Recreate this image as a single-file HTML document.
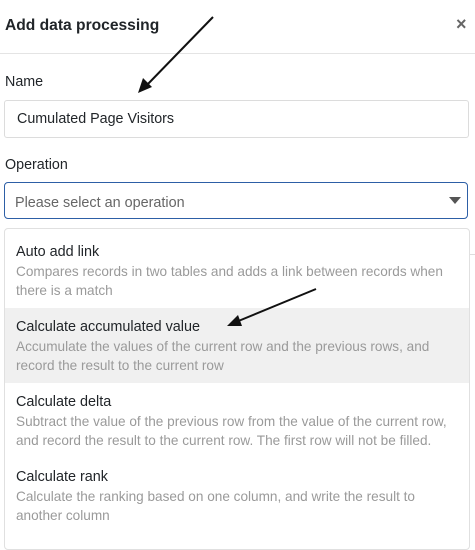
<!DOCTYPE html>
<html><head><style>
body{margin:0;width:475px;height:528px;overflow:hidden;background:#fff;font-family:"Liberation Sans",Arial,sans-serif;color:#212529;position:relative}
.a{position:absolute}
.t{font-size:14.4px;color:#212529}
.d{font-size:13.6px;color:#9a9a9a;line-height:19px;white-space:nowrap}
</style></head><body>
<div class="a" style="left:5px;top:17px;font-size:15.6px;font-weight:bold">Add data processing</div>
<div class="a" style="left:456px;top:14px;font-size:18px;color:#666;font-weight:bold">×</div>
<div class="a" style="left:0;top:53px;width:475px;height:1px;background:#e4e4e4"></div>
<div class="a" style="left:5px;top:74px;font-size:14.3px">Name</div>
<div class="a" style="left:4px;top:100px;width:463px;height:36px;border:1px solid #dcdcdc;border-radius:3px"></div>
<div class="a" style="left:17px;top:111px;font-size:14.3px">Cumulated Page Visitors</div>
<div class="a" style="left:5px;top:157px;font-size:14.3px">Operation</div>
<div class="a" style="left:4px;top:182px;width:462px;height:35px;border:1.5px solid #2d5fa6;border-radius:4px"></div>
<div class="a" style="left:15px;top:195px;font-size:14.4px;color:#666">Please select an operation</div>
<div class="a" style="left:449px;top:197px;width:0;height:0;border-left:6px solid transparent;border-right:6px solid transparent;border-top:7px solid #555"></div>
<div class="a" style="left:469px;top:254px;width:6px;height:1px;background:#ddd"></div>
<div class="a" style="left:4px;top:228px;width:464px;height:320px;border:1px solid #e0e0e0;border-radius:4px;background:#fff"></div>
<div class="a" style="left:5px;top:308px;width:464px;height:75px;background:#f0f0f0"></div>
<div class="a t" style="left:16px;top:244px">Auto add link</div>
<div class="a d" style="left:16px;top:262px">Compares records in two tables and adds a link between records when<br>there is a match</div>
<div class="a t" style="left:16px;top:319px">Calculate accumulated value</div>
<div class="a d" style="left:16px;top:337px">Accumulate the values of the current row and the previous rows, and<br>record the result to the current row</div>
<div class="a t" style="left:16px;top:394px">Calculate delta</div>
<div class="a d" style="left:16px;top:412px">Subtract the value of the previous row from the value of the current row,<br>and record the result to the current row. The first row will not be filled.</div>
<div class="a t" style="left:16px;top:469px">Calculate rank</div>
<div class="a d" style="left:16px;top:487px">Calculate the ranking based on one column, and write the result to<br>another column</div>
<svg class="a" style="left:0;top:0" width="475" height="528">
<line x1="213" y1="17" x2="146" y2="86" stroke="#111" stroke-width="2"/>
<polygon points="138,93 143,78 152,87" fill="#111"/>
<line x1="316" y1="289" x2="236" y2="322" stroke="#111" stroke-width="2"/>
<polygon points="227,326 238,315 242,326" fill="#111"/>
</svg>
</body></html>
